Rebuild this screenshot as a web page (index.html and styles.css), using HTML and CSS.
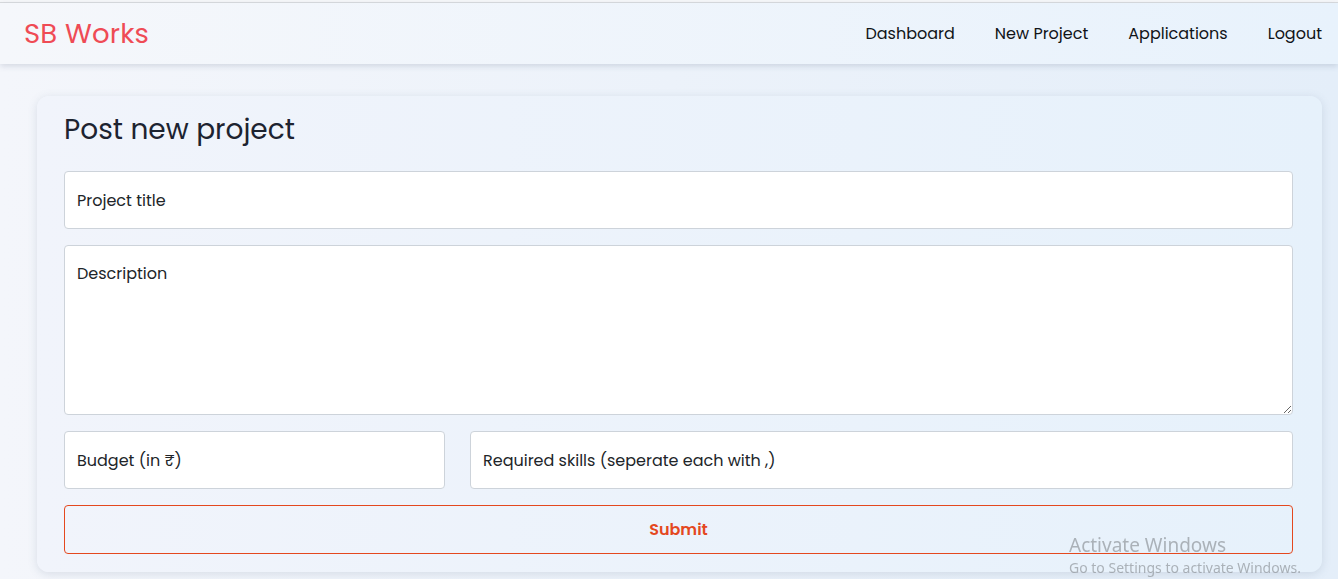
FILE: index.html
```html
<!DOCTYPE html>
<html lang="en">
<head>
<meta charset="utf-8">
<title>SB Works - New Project</title>
<link rel="stylesheet" href="styles.css">
</head>
<body>
<div class="topstrip"></div>
<header class="navbar">
  <h3 class="logo">SB Works</h3>
  <nav class="nav-links">
    <a class="nav-link" href="#">Dashboard</a>
    <a class="nav-link" href="#">New Project</a>
    <a class="nav-link" href="#">Applications</a>
    <a class="nav-link" href="#">Logout</a>
  </nav>
</header>
<main class="page">
  <section class="card">
    <h2 class="card-title">Post new project</h2>
    <form class="form">
      <input class="field" type="text" placeholder="Project title">
      <textarea class="field field-area" placeholder="Description"></textarea>
      <div class="form-row">
        <input class="field" type="text" placeholder="Budget (in ₹)">
        <input class="field" type="text" placeholder="Required skills (seperate each with ,)">
      </div>
      <button class="submit" type="button">Submit</button>
    </form>
  </section>
</main>
<div class="watermark">
  <div class="wm-title">Activate Windows</div>
  <div class="wm-sub">Go to Settings to activate Windows.</div>
</div>
</body>
</html>
```
FILE: styles.css
```css
* { box-sizing: border-box; }
html, body { margin: 0; padding: 0; }
body {
  font-family: "Poppins", "Open Sans", "Noto Sans", sans-serif;
  background: linear-gradient(90deg, #f4f6fb 0%, #e4eef9 100%);
  min-height: 579px;
  overflow: hidden;
  color: #212529;
}
.topstrip {
  height: 3px;
  background: #f6f7f9;
  border-bottom: 1px solid #d9dbde;
}
.navbar {
  height: 61px;
  display: flex;
  align-items: center;
  justify-content: space-between;
  padding: 0 16px 0 24px;
  background: linear-gradient(90deg, #f5f7fb 0%, #e8f2fc 100%);
  box-shadow: 0 2px 6px rgba(60, 80, 110, 0.18);
  position: relative;
}
.logo {
  margin: 0;
  font-size: 27.5px;
  font-weight: 400;
  color: #ef4b55;
  letter-spacing: 0.2px;
  padding-top: 1px;
}
.nav-links {
  display: flex;
  gap: 40px;
}
.nav-link {
  color: #111418;
  text-decoration: none;
  font-size: 16px;
}
.page {
  padding: 32px 16px 0 37px;
}
.card {
  width: 1285px;
  border-radius: 12px;
  background: linear-gradient(90deg, #f1f4fb 0%, #e6f1fb 100%);
  box-shadow: 0 2px 10px rgba(90, 110, 140, 0.18);
  padding: 14px 29px 18px 27px;
}
.card-title {
  margin: 0 0 21px 0;
  font-size: 28px;
  font-weight: 400;
  color: #1d2330;
  line-height: 40px;
}
.form {
  display: flex;
  flex-direction: column;
  gap: 16px;
}
.field {
  display: block;
  width: 100%;
  height: 58px;
  border: 1px solid #cdd3da;
  border-radius: 4px;
  background: #fff;
  padding: 0 12px;
  font-family: inherit;
  font-size: 16px;
  color: #212529;
  outline: none;
}
.field::placeholder { color: #212529; opacity: 1; }
.field-area {
  height: 170px;
  padding-top: 15px;
  resize: vertical;
}
.form-row {
  display: grid;
  grid-template-columns: 381px 1fr;
  gap: 25px;
}
.submit {
  height: 49px;
  width: 100%;
  border: 1px solid #e4481e;
  border-radius: 4px;
  background: transparent;
  color: #e4481e;
  font-family: inherit;
  font-weight: 600;
  font-size: 16px;
}
.watermark {
  position: fixed;
  left: 1069px;
  top: 533px;
  color: rgba(130, 135, 140, 0.6);
  font-family: "Noto Sans", "Open Sans", sans-serif;
  pointer-events: none;
}
.wm-title { font-size: 19px; line-height: 24px; }
.wm-sub { font-size: 14px; line-height: 20px; margin-top: 1px; }
```
